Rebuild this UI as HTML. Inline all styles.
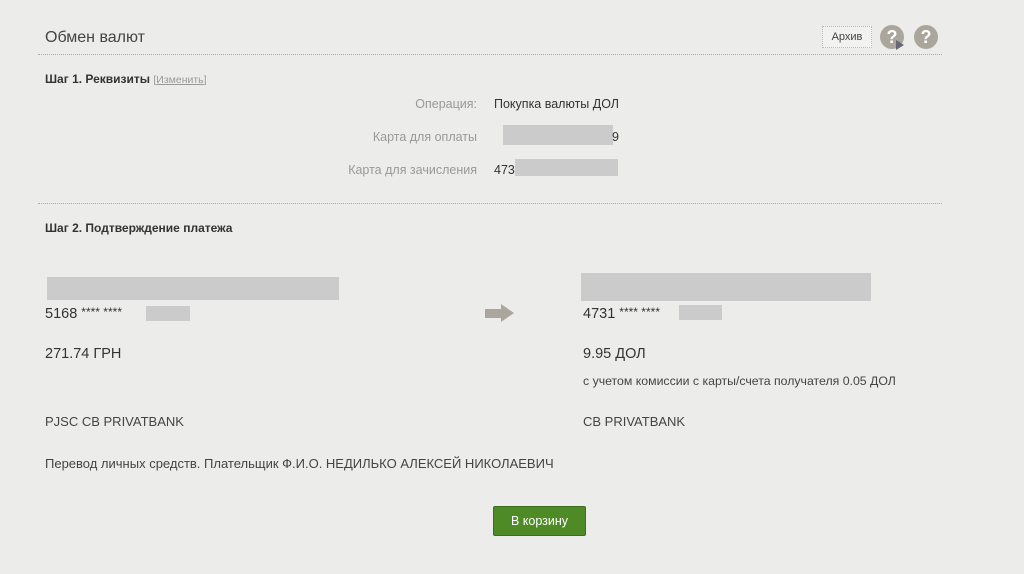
<!DOCTYPE html>
<html><head><meta charset="utf-8"><style>
body{margin:0;width:1024px;height:574px;background:#ececea;font-family:"Liberation Sans",sans-serif;color:#333;position:relative;overflow:hidden}
.a{position:absolute;white-space:nowrap}
.hr{position:absolute;left:38px;width:904px;border-top:1px dotted #aaa;height:0}
.blur{position:absolute;background:#cbcbcb}
.lbl{color:#999;font-size:12.5px;text-align:right;width:200px}
.val{font-size:12.5px;color:#333}
.q{position:absolute;width:24px;height:24px;border-radius:50%;background:#aaa69c;color:#fff;font-weight:bold;font-size:18px;text-align:center;line-height:24px}
</style></head><body>
<div class="a" style="left:45px;top:29px;font-size:16px;color:#444">Обмен валют</div>
<div class="a" style="left:822px;top:26px;width:48px;height:20px;border:1px dotted #bbb;background:#f2f2f0;font-size:11px;text-align:center;line-height:20px;color:#444">Архив</div>
<div class="q" style="left:880px;top:25px">?</div>
<div style="position:absolute;left:896px;top:40px;width:0;height:0;border-left:8px solid #667;border-top:5px solid transparent;border-bottom:5px solid transparent"></div>
<div class="q" style="left:914px;top:25px">?</div>
<div class="hr" style="top:54px"></div>
<div class="a" style="left:45px;top:72px;font-size:12px;font-weight:bold;color:#333">Шаг 1. Реквизиты <span style="font-weight:normal;color:#999;font-size:10.5px">[<u>Изменить</u>]</span></div>
<div class="a lbl" style="left:277px;top:97px">Операция:</div>
<div class="a val" style="left:494px;top:97px">Покупка валюты ДОЛ</div>
<div class="a lbl" style="left:277px;top:130px">Карта для оплаты</div>
<div class="blur" style="left:503px;top:125px;width:110px;height:20px"></div>
<div class="a val" style="left:612px;top:130px">9</div>
<div class="a lbl" style="left:277px;top:163px">Карта для зачисления</div>
<div class="a val" style="left:494px;top:163px">473</div>
<div class="blur" style="left:515px;top:159px;width:103px;height:17px"></div>
<div class="hr" style="top:203px"></div>
<div class="a" style="left:45px;top:221px;font-size:12px;font-weight:bold">Шаг 2. Подтверждение платежа</div>
<div class="blur" style="left:47px;top:277px;width:292px;height:23px"></div>
<div class="a" style="left:45px;top:305px;font-size:14.5px">5168 <span style="font-size:12px;vertical-align:2px">**** ****</span></div>
<div class="blur" style="left:146px;top:306px;width:44px;height:15px"></div>
<div class="a" style="left:45px;top:346px;font-size:14.5px">271.74 ГРН</div>
<div style="position:absolute;left:485px;top:309px;width:16px;height:9px;background:#aaa69c"></div>
<div style="position:absolute;left:501px;top:304px;width:0;height:0;border-left:13px solid #aaa69c;border-top:9px solid transparent;border-bottom:9px solid transparent"></div>
<div class="blur" style="left:581px;top:273px;width:290px;height:28px"></div>
<div class="a" style="left:583px;top:305px;font-size:14.5px">4731 <span style="font-size:12px;vertical-align:2px">**** ****</span></div>
<div class="blur" style="left:679px;top:305px;width:43px;height:15px"></div>
<div class="a" style="left:583px;top:346px;font-size:14.5px">9.95 ДОЛ</div>
<div class="a" style="left:583px;top:374px;font-size:12.3px;color:#444">с учетом комиссии с карты/счета получателя 0.05 ДОЛ</div>
<div class="a" style="left:45px;top:414px;font-size:13px;color:#444">PJSC CB PRIVATBANK</div>
<div class="a" style="left:583px;top:414px;font-size:13px;color:#444">CB PRIVATBANK</div>
<div class="a" style="left:45px;top:456px;font-size:13px;color:#444">Перевод личных средств. Плательщик Ф.И.О. НЕДИЛЬКО АЛЕКСЕЙ НИКОЛАЕВИЧ</div>
<div class="a" style="left:493px;top:506px;width:93px;height:30px;background:#4e8a25;border:1px solid #3d6d1c;box-sizing:border-box;color:#fff;font-size:12.5px;text-align:center;line-height:28px;border-radius:2px">В корзину</div>
</body></html>
